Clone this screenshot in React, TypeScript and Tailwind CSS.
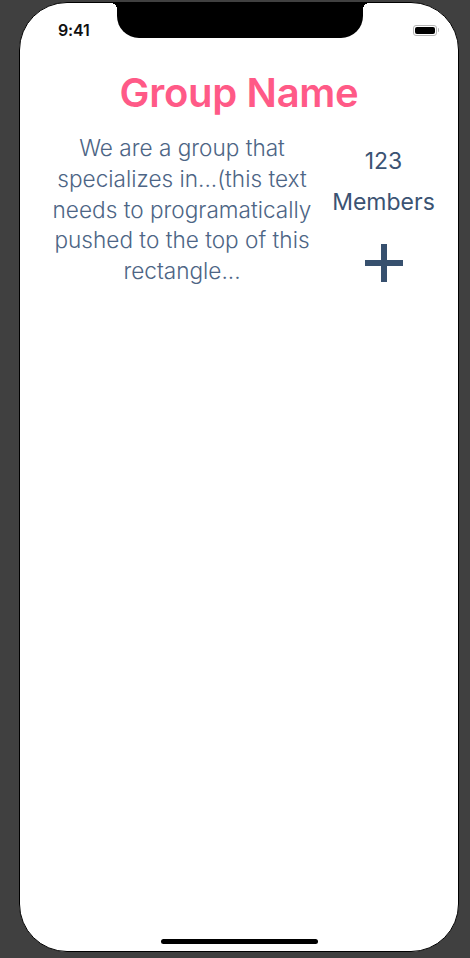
import React from "react";

export default function App() {
  const lines = [
    "We are a group that",
    "specializes in...(this text",
    "needs to programatically",
    "pushed to the top of this",
    "rectangle...",
  ];
  return (
    <div className="w-[470px] h-[958px] bg-[#404040] pt-[2px] pl-[19px]" style={{ fontFamily: "Inter, 'Noto Sans', sans-serif" }}>
      <div className="relative w-[440px] h-[950px] bg-white border border-black rounded-[48px] overflow-hidden flex flex-col">
        {/* notch */}
        <div className="absolute left-[97px] top-0 w-[246px] h-[35px] bg-black rounded-b-[22px]" />
        <div className="absolute left-[91px] top-0 w-[6px] h-[6px] bg-[radial-gradient(circle_at_0_100%,transparent_6px,black_6px)]" />
        <div className="absolute left-[343px] top-0 w-[6px] h-[6px] bg-[radial-gradient(circle_at_100%_100%,transparent_6px,black_6px)]" />

        {/* status bar */}
        <div className="flex items-center justify-between h-[50px] pl-[38px] pr-[19px] pt-[4px]">
          <span className="text-[16px] font-semibold text-[#111] tracking-[-0.2px]">9:41</span>
          <div className="flex items-center gap-[1px]">
            <div className="w-[24px] h-[11px] rounded-[3px] border border-[#b5b5b5] p-[1px]">
              <div className="w-full h-full bg-black rounded-[2px]" />
            </div>
            <div className="w-[1.5px] h-[4px] bg-[#b5b5b5] rounded-r-sm" />
          </div>
        </div>

        {/* title */}
        <h1 className="text-center text-[40px] leading-[48px] font-semibold text-[#ff5a87] mt-[16px] tracking-[-0.3px]">
          Group Name
        </h1>

        {/* content */}
        <div className="flex mt-[16px] pl-[19px] pr-[16px]">
          <div className="w-[286px] flex flex-col items-center text-[22.6px] leading-[30.8px] text-[#4d6585] font-light">
            {lines.map((l) => (
              <span key={l} className="whitespace-nowrap">{l}</span>
            ))}
          </div>
          <div className="flex-1 flex flex-col items-center text-[23px] text-[#3b5373] pt-[13px]">
            <span className="leading-[30px]">123</span>
            <span className="leading-[30px] mt-[11px]">Members</span>
            <svg width="38" height="38" viewBox="0 0 38 38" className="mt-[27px]">
              <rect x="16" y="0" width="6" height="38" fill="#37506e" />
              <rect x="0" y="16" width="38" height="6" fill="#37506e" />
            </svg>
          </div>
        </div>

        <div className="flex-1" />
        {/* home indicator */}
        <div className="flex justify-center pb-[7px]">
          <div className="w-[157px] h-[5px] bg-black rounded-full" />
        </div>
      </div>
    </div>
  );
}
